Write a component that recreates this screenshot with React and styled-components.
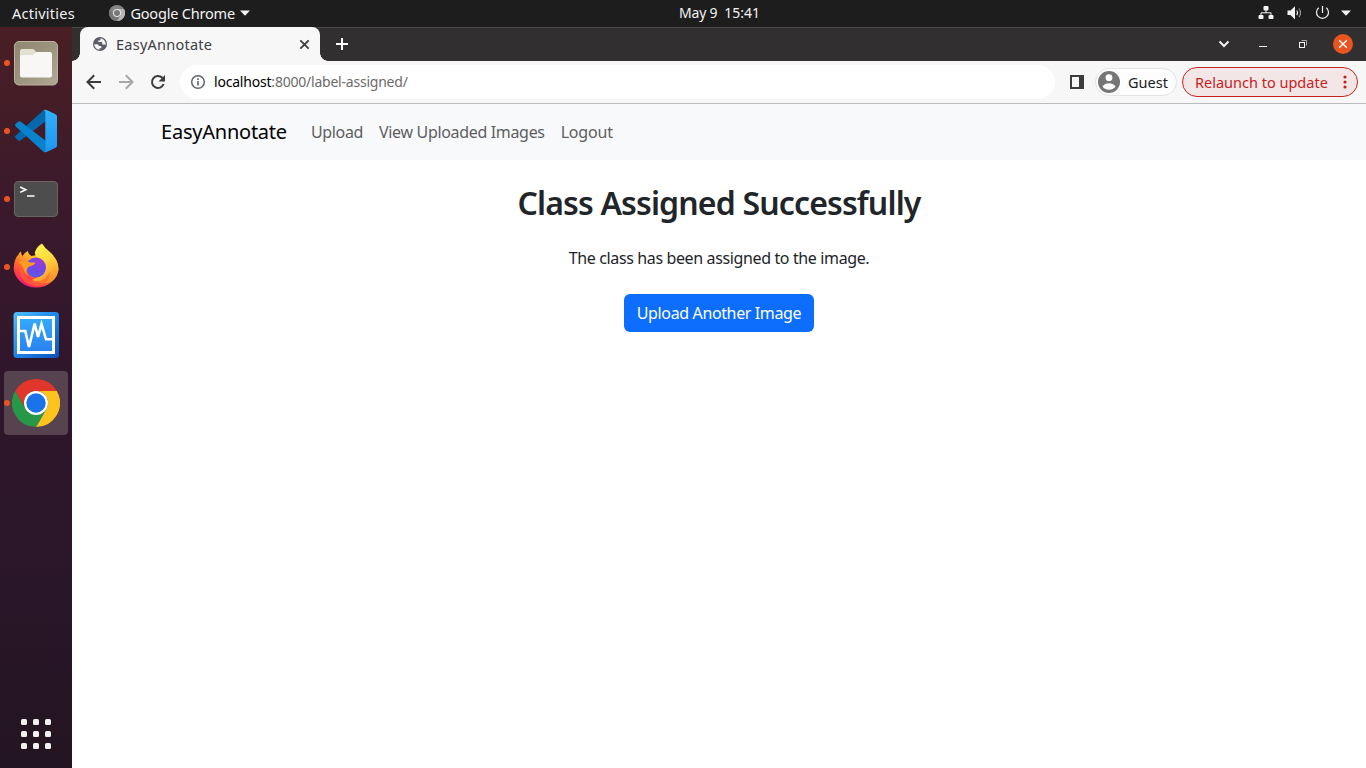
import React from "react";
import styled, { createGlobalStyle, css } from "styled-components";

const Global = createGlobalStyle`
  * { box-sizing: border-box; }
  html, body { margin: 0; padding: 0; overflow: hidden; }
  body { font-family: "Noto Sans", "Open Sans", sans-serif; font-size: 16px; color: #212529; }
  svg { display: block; flex: none; }
`;

const Desktop = styled.div`
  width: 1366px;
  height: 768px;
  display: flex;
  flex-direction: column;
  background: #fff;
  overflow: hidden;
`;

const Label = styled.span`
  font-size: ${(p) => p.$size || 14}px;
  line-height: ${(p) => p.$line || 20}px;
  letter-spacing: ${(p) => p.$track || 0}px;
  color: ${(p) => p.$color || "inherit"};
  white-space: pre;
`;

const TopBar = styled.header`
  height: 27px;
  flex: none;
  display: grid;
  grid-template-columns: 667px auto 1fr;
  align-items: center;
  background: #1d1d1d;
  color: #f2f2f2;
  padding: 0 15px 1px 12px;
`;

const TopLeft = styled.div`
  display: flex;
  align-items: center;
`;

const AppMenu = styled.div`
  display: flex;
  align-items: center;
  gap: 5.5px;
  margin-left: 34px;
`;

const Clock = styled.div`
  display: flex;
  gap: 7px;
`;

const StatusArea = styled.div`
  display: flex;
  align-items: center;
  justify-content: flex-end;
`;

const Body = styled.div`
  flex: 1;
  display: flex;
  min-height: 0;
`;

const Dock = styled.nav`
  width: 72px;
  flex: none;
  display: flex;
  flex-direction: column;
  align-items: center;
  gap: 4px;
  padding-top: 4px;
  background: linear-gradient(180deg, #4a1f24 0%, #3c1a2b 22%, #2f162b 48%, #2a1629 75%, #231520 100%);
`;

const DockItem = styled.div`
  position: relative;
  width: 64px;
  height: 64px;
  display: flex;
  align-items: center;
  justify-content: center;
  border-radius: 4px;
  ${(p) => p.$active && css`background: #57424f;`}
`;

const RunningDot = styled.i`
  position: absolute;
  left: 0;
  top: 29px;
  width: 6px;
  height: 6px;
  border-radius: 50%;
  background: #e95420;
`;

const AppGrid = styled.div`
  margin-top: auto;
  margin-bottom: 19px;
  display: grid;
  grid-template-columns: repeat(3, 6px);
  grid-auto-rows: 6px;
  gap: 6px;
`;

const GridDot = styled.i`
  border-radius: 1.5px;
  background: #f2f1ef;
`;

const Browser = styled.main`
  flex: 1;
  display: flex;
  flex-direction: column;
  min-width: 0;
`;

const TabStrip = styled.div`
  height: 34px;
  flex: none;
  display: flex;
  background: #322f30;
  box-shadow: inset 0 1px 0 #4b4849;
  padding-left: 8px;
`;

const Tab = styled.div`
  position: relative;
  width: 240px;
  height: 34px;
  display: flex;
  align-items: center;
  padding: 0 10px 0 12px;
  gap: 8px;
  border-radius: 8px 8px 0 0;
  background: #f7f7f7;
  &::before, &::after {
    content: "";
    position: absolute;
    bottom: 0;
    width: 8px;
    height: 8px;
  }
  &::before { left: -8px; background: radial-gradient(circle at 0 0, transparent 7.5px, #f7f7f7 8px); }
  &::after { right: -8px; background: radial-gradient(circle at 100% 0, transparent 7.5px, #f7f7f7 8px); }
`;

const TabTitle = styled.div`
  flex: 1;
  display: flex;
`;

const NewTab = styled.div`
  display: flex;
  align-items: center;
  margin-left: 15px;
`;

const WindowButtons = styled.div`
  margin-left: auto;
  display: flex;
  align-items: center;
  padding-right: 13px;
`;

const CloseButton = styled.div`
  width: 20px;
  height: 20px;
  margin-left: 25px;
  border-radius: 50%;
  background: #e95420;
  display: flex;
  align-items: center;
  justify-content: center;
`;

const Toolbar = styled.div`
  height: 43px;
  flex: none;
  display: flex;
  align-items: center;
  background: #f7f7f7;
  border-bottom: 1px solid #bcbcbc;
  padding: 0 8px 0 14px;
`;

const NavIcons = styled.div`
  display: flex;
  gap: 16px;
`;

const AddressBar = styled.div`
  width: 875px;
  height: 34px;
  margin-left: 14px;
  padding-left: 10px;
  display: flex;
  align-items: center;
  gap: 8px;
  border-radius: 17px;
  background: #fff;
`;

const Url = styled.div`
  display: flex;
`;

const Profile = styled.div`
  width: 82px;
  height: 28px;
  margin-left: 11px;
  padding-left: 2px;
  display: flex;
  align-items: center;
  gap: 8px;
  border-radius: 14px;
  border: 1px solid #e4e4e4;
  background: #fdfdfd;
`;

const Relaunch = styled.div`
  width: 176px;
  height: 30px;
  margin-left: auto;
  padding: 0 10.5px 0 12px;
  display: flex;
  align-items: center;
  justify-content: space-between;
  border-radius: 15px;
  border: 1px solid #c5221f;
  background: #f3e6e6;
`;

const SiteNav = styled.nav`
  height: 56px;
  flex: none;
  display: flex;
  align-items: center;
  background: #f8f9fb;
  padding-left: 89px;
`;

const Brand = styled.div`
  width: 126px;
  margin-right: 24px;
  display: flex;
`;

const Links = styled.div`
  display: flex;
  gap: 16px;
`;

const Page = styled.section`
  flex: 1;
  display: flex;
  flex-direction: column;
  align-items: center;
  padding-top: 24px;
  background: #fff;
`;

const Heading = styled.h1`
  margin: 0 0 24px;
  font-size: 32px;
  line-height: 38px;
  font-weight: 600;
  letter-spacing: -0.85px;
  white-space: nowrap;
`;

const Message = styled.p`
  margin: 0 0 24px;
  line-height: 24px;
  letter-spacing: -0.37px;
  white-space: nowrap;
`;

const UploadButton = styled.button`
  width: 190px;
  height: 38px;
  padding: 0;
  border: 0;
  border-radius: 6px;
  background: #0d6efd;
  color: #fff;
  font: inherit;
  line-height: 24px;
  letter-spacing: -0.37px;
  white-space: nowrap;
`;

const FilesIcon = () => (
  <svg width="48" height="48" viewBox="0 0 48 48">
    <defs>
      <linearGradient id="files" x1="0" y1="0" x2="1" y2="1">
        <stop offset="0" stopColor="#8f876f" />
        <stop offset="0.5" stopColor="#9c947f" />
        <stop offset="1" stopColor="#b0a993" />
      </linearGradient>
    </defs>
    <rect x="2.5" y="2.5" width="43" height="43.5" rx="4.5" fill="url(#files)" stroke="#b9b3a2" />
    <path d="M8 18v-6a2 2 0 0 1 2-2h10.500q1 0 1.700.8L24 13H36v6z" fill="#e2dfd3" />
    <path d="M8 18a2 2 0 0 1 2-2h10q1 0 1.800-.8l1.400-1.400q.7-.8 1.600-.8H38a2 2 0 0 1 2 2V36.500a2 2 0 0 1-2 2H10a2 2 0 0 1-2-2z" fill="#f8f7f6" />
  </svg>
);

const CodeIcon = () => (
  <svg width="48" height="48" viewBox="0 0 48 48">
    <defs>
      <linearGradient id="code" x1="0" y1="0" x2="0" y2="1">
        <stop offset="0" stopColor="#32b2f8" />
        <stop offset="1" stopColor="#1f94f0" />
      </linearGradient>
    </defs>
    <path d="M33.500 2.800Q31.500 3 30.300 4.200L3.500 28.800a1.500 1.500 0 0 0 0 2.200L6 33.300q1.200 1 2.500.1L34 14z" fill="#0669ad" />
    <path d="M33.500 45.200Q31.500 45 30.300 43.800L3.500 19.200a1.500 1.500 0 0 1 0-2.200L6 14.700q1.200-1 2.500-.1L34 34z" fill="#0a83cd" />
    <path d="M30.500 44.200Q33.300 46 33.300 42.500V5.500Q33.300 2 30.500 3.800Q32.500 2 35.200 3.200L43.500 7.200Q45 8 45 9.600V38.400Q45 40 43.500 40.800L35.200 44.800Q32.500 46 30.500 44.200z" fill="url(#code)" />
  </svg>
);

const TerminalIcon = () => (
  <svg width="48" height="48" viewBox="0 0 48 48">
    <rect x="2.500" y="6.500" width="43" height="35" rx="3.500" fill="#4d4d4d" stroke="#696662" />
    <path d="M8.200 12l5.600 2.700-5.600 2.700" fill="none" stroke="#fff" strokeWidth="1.600" />
    <path d="M15 21h7.500" stroke="#fff" strokeWidth="1.500" />
  </svg>
);

const FirefoxIcon = () => (
  <svg width="48" height="48" viewBox="0 0 48 48">
    <defs>
      <linearGradient id="ffBody" x1="0.85" y1="0.1" x2="0.25" y2="0.95">
        <stop offset="0" stopColor="#fff04f" />
        <stop offset="0.3" stopColor="#ffb52a" />
        <stop offset="0.6" stopColor="#ff6a2c" />
        <stop offset="0.85" stopColor="#ff3750" />
        <stop offset="1" stopColor="#e8127c" />
      </linearGradient>
      <linearGradient id="ffFlame" x1="0.3" y1="0" x2="0.7" y2="1">
        <stop offset="0" stopColor="#fff44f" />
        <stop offset="0.45" stopColor="#ffd83c" />
        <stop offset="1" stopColor="#ff8a2a" />
      </linearGradient>
      <radialGradient id="ffGlobe" cx="0.65" cy="0.25" r="0.8">
        <stop offset="0" stopColor="#a338d6" />
        <stop offset="0.5" stopColor="#7048e6" />
        <stop offset="1" stopColor="#5b5bea" />
      </radialGradient>
    </defs>
    <path d="M6.500 11.500Q7.500 8.800 9 8.500Q9 11.500 10.500 13Q13 9 16 8Q16 11 19.500 13L36 10Q46.500 17 46.500 26A22.500 20.500 0 0 1 1.700 26Q1.700 16 6.500 11.500z" fill="url(#ffBody)" />
    <path d="M30 0.500Q33 5.500 38.500 9.500Q41 11.500 41.500 13Q47 19 46.300 28Q44 39 34 40Q28 41 20 37L32 31Q35 22 30 16Q22 14 23 9Q24.500 3.500 30 0.500z" fill="url(#ffFlame)" />
    <circle cx="24" cy="24.500" r="10" fill="url(#ffGlobe)" />
    <path d="M7 19Q10 16.500 14 17.500Q15 19.500 23 19.500Q24 21.500 17.500 23.500Q14.500 25 14.500 28Q14 31 17 33Q12 31 11 24Q9 21 7 19z" fill="#ff9c24" />
    <path d="M10 24Q10 36 22 38Q34 39 38 28Q38 43 24 43Q10 42 8 29z" fill="#ff6530" opacity="0.65" />
  </svg>
);

const MonitorIcon = () => (
  <svg width="48" height="48" viewBox="0 0 48 48">
    <defs>
      <linearGradient id="vmFrame" x1="0" y1="0" x2="1" y2="1">
        <stop offset="0" stopColor="#4fc0fb" />
        <stop offset="0.5" stopColor="#1f86e8" />
        <stop offset="1" stopColor="#0a50be" />
      </linearGradient>
      <linearGradient id="vmScreen" x1="0" y1="0" x2="0" y2="1">
        <stop offset="0" stopColor="#35abfb" />
        <stop offset="1" stopColor="#2880f0" />
      </linearGradient>
    </defs>
    <rect x="1.500" y="1" width="45.500" height="46" rx="3.500" fill="url(#vmFrame)" />
    <rect x="6.500" y="6.500" width="35" height="35" fill="url(#vmScreen)" stroke="#fff" strokeWidth="3" />
    <path d="M7.500 20h5.800l3.700 16 5.700-23.500L26 26l3.500-13L34 28.300h7" fill="none" stroke="#fff" strokeWidth="2.600" />
  </svg>
);

const ChromeIcon = () => (
  <svg width="48" height="48" viewBox="0 0 48 48">
    <path d="M24 12H44.800A24 24 0 0 0 3.200 12L13.600 30A12 12 0 0 1 24 12z" fill="#e0362c" />
    <path d="M44.800 12A24 24 0 0 1 24 48L34.400 30A12 12 0 0 0 24 12z" fill="#fcc31e" />
    <path d="M24 48A24 24 0 0 1 3.200 12L13.600 30A12 12 0 0 0 34.400 30z" fill="#279847" />
    <circle cx="24" cy="24" r="12" fill="#fff" />
    <circle cx="24" cy="24" r="9.700" fill="#1a73e8" />
  </svg>
);

const ChromeMonoIcon = () => (
  <svg width="16" height="16" viewBox="0 0 16 16">
    <circle cx="8" cy="8" r="8" fill="#858585" />
    <path d="M8 4H15A8 8 0 0 1 8 16L11.500 10z" fill="#b5b5b5" />
    <path d="M1.100 4A8 8 0 0 0 8 16L11 11 4.500 10z" fill="#777" />
    <circle cx="8" cy="8" r="4" fill="#e6e6e6" />
    <circle cx="8" cy="8" r="3" fill="#777" />
  </svg>
);

const Caret = () => (
  <svg width="10" height="6" viewBox="0 0 10 6">
    <path d="M0 .5h10L5 5.700z" fill="#f2f2f2" />
  </svg>
);

const StatusIcons = () => (
  <svg width="93" height="18" viewBox="0 0 93 18" fill="none" stroke="#f2f2f2">
    <g fill="#f2f2f2" stroke="none">
      <rect x="5.500" y="2" width="5" height="4.500" rx="1" />
      <rect x="0.500" y="11" width="5" height="4" rx="1" />
      <rect x="10.500" y="11" width="5" height="4" rx="1" />
      <path d="M29.500 6.500h3l4.500-4.300v13.200l-4.500-4.300h-3z" />
      <path d="M83 6.500h10L88 11.700z" />
    </g>
    <path d="M8 6v3M3 11.500V8.800h10v2.700" />
    <path d="M38.800 6.500q1.600 2.300 0 4.600" strokeWidth="1.200" />
    <path d="M41 4.500q3 4.300 0 8.600" stroke="#9a9a9a" strokeWidth="1.100" />
    <path d="M60.700 3.700a6 6 0 1 0 7.600 0M64.500 2v7" strokeWidth="1.200" />
  </svg>
);

const GlobeIcon = () => (
  <svg width="16" height="16" viewBox="0 0 16 16">
    <circle cx="8" cy="8" r="7" fill="#5a5e64" />
    <path d="M2.200 8.300h3q1.600.2 1.600 1.700h2.500v2.300H7.500v1.500A6 6 0 0 1 2.200 8.300z" fill="#f7f7f7" />
    <path d="M8.500 2.200v1.200q0 1-1.200 1H6.200V6h4v2.400h2.400q.9.200 1 .9A6 6 0 0 0 8.500 2.200z" fill="#f7f7f7" />
  </svg>
);

const CloseIcon = ({ color, size = 10, weight = 1.6 }) => (
  <svg width={size} height={size} viewBox="0 0 10 10" fill="none" stroke={color} strokeWidth={weight}>
    <path d="M1.200 1.200l7.600 7.600M8.800 1.200L1.200 8.800" />
  </svg>
);

const PlusIcon = () => (
  <svg width="14" height="14" viewBox="0 0 14 14" stroke="#fff" strokeWidth="2">
    <path d="M7 1v12M1 7h12" />
  </svg>
);

const WindowGlyphs = () => (
  <svg width="90" height="20" viewBox="0 0 90 20" fill="none" stroke="#f2f2f2">
    <path d="M1.500 7.500l4.500 4.500 4.500-4.500" strokeWidth="2" />
    <path d="M41 12.500h8" />
    <path d="M83.500 6.500h5v5" stroke="#a9a7a7" />
    <rect x="81.500" y="8.500" width="5" height="5" />
  </svg>
);

const BackIcon = () => (
  <svg width="16" height="16" viewBox="0 0 16 16" fill="none" stroke="#3c3c3c" strokeWidth="2">
    <path d="M15 8H2M8.200 1.300L1.500 8l6.700 6.700" />
  </svg>
);

const ForwardIcon = () => (
  <svg width="16" height="16" viewBox="0 0 16 16" fill="none" stroke="#a6a6a6" strokeWidth="2">
    <path d="M1 8h13M7.800 1.300L14.500 8l-6.700 6.700" />
  </svg>
);

const ReloadIcon = () => (
  <svg width="16" height="16" viewBox="0 0 16 16">
    <path d="M13.600 10A6 6 0 1 1 12.300 3.800L13.500 5" fill="none" stroke="#3c3c3c" strokeWidth="2" />
    <path d="M15 1v6.500H8.500z" fill="#3c3c3c" />
  </svg>
);

const InfoIcon = () => (
  <svg width="16" height="16" viewBox="0 0 16 16">
    <circle cx="8" cy="8" r="6.300" fill="none" stroke="#5f6368" strokeWidth="1.500" />
    <path d="M8 7v4.600M8 4.300v1.700" stroke="#5f6368" strokeWidth="1.600" />
  </svg>
);

const SidePanelIcon = styled.div`
  width: 14px;
  height: 14px;
  margin-left: 15px;
  border: 2px solid #3c3c3c;
  border-right-width: 5px;
`;

const AvatarIcon = () => (
  <svg width="22" height="22" viewBox="0 0 22 22">
    <circle cx="11" cy="11" r="11" fill="#767676" />
    <circle cx="11" cy="6.700" r="3.400" fill="#fff" />
    <path d="M4.500 15.500Q7 12.300 11 12.300T17.500 15.500Q15 18.800 11 18.800T4.500 15.500z" fill="#fff" />
  </svg>
);

const MoreIcon = () => (
  <svg width="4" height="14" viewBox="0 0 4 14" fill="#c5221f">
    <circle cx="2" cy="2" r="1.600" />
    <circle cx="2" cy="7" r="1.600" />
    <circle cx="2" cy="12" r="1.600" />
  </svg>
);

const dockApps = [
  { Icon: FilesIcon, running: true },
  { Icon: CodeIcon, running: true },
  { Icon: TerminalIcon, running: true },
  { Icon: FirefoxIcon, running: true },
  { Icon: MonitorIcon },
  { Icon: ChromeIcon, running: true, active: true },
];

const links = [
  { text: "Upload", track: -0.36 },
  { text: "View Uploaded Images", track: -0.33 },
  { text: "Logout", track: -0.2 },
];

export default function App() {
  return (
    <Desktop>
      <Global />
      <TopBar>
        <TopLeft>
          <Label $size={14.5} $track={0.25}>Activities</Label>
          <AppMenu>
            <ChromeMonoIcon />
            <Label $size={14.5} $track={-0.2}>Google Chrome</Label>
            <Caret />
          </AppMenu>
        </TopLeft>
        <Clock>
          <Label $track={-0.2}>May 9</Label>
          <Label>15:41</Label>
        </Clock>
        <StatusArea>
          <StatusIcons />
        </StatusArea>
      </TopBar>
      <Body>
        <Dock>
          {dockApps.map(({ Icon, running, active }, i) => (
            <DockItem key={i} $active={active}>
              <Icon />
              {running && <RunningDot />}
            </DockItem>
          ))}
          <AppGrid>
            {Array.from({ length: 9 }, (_, i) => <GridDot key={i} />)}
          </AppGrid>
        </Dock>
        <Browser>
          <TabStrip>
            <Tab>
              <GlobeIcon />
              <TabTitle><Label $size={14.5} $track={0.25} $color="#3c4043">EasyAnnotate</Label></TabTitle>
              <CloseIcon color="#3c3c3c" size={11} />
            </Tab>
            <NewTab><PlusIcon /></NewTab>
            <WindowButtons>
              <WindowGlyphs />
              <CloseButton><CloseIcon color="#fff" weight={1.4} /></CloseButton>
            </WindowButtons>
          </TabStrip>
          <Toolbar>
            <NavIcons>
              <BackIcon />
              <ForwardIcon />
              <ReloadIcon />
            </NavIcons>
            <AddressBar>
              <InfoIcon />
              <Url>
                <Label $track={-0.2} $color="#000">localhost</Label>
                <Label $track={-0.22} $color="#6b6b6b">:8000/label-assigned/</Label>
              </Url>
            </AddressBar>
            <SidePanelIcon />
            <Profile>
              <AvatarIcon />
              <Label $size={14.5} $color="#202124">Guest</Label>
            </Profile>
            <Relaunch>
              <Label $size={14.5} $color="#c5221f">Relaunch to update</Label>
              <MoreIcon />
            </Relaunch>
          </Toolbar>
          <SiteNav>
            <Brand><Label $size={20} $line={30} $track={-0.23} $color="#000">EasyAnnotate</Label></Brand>
            <Links>
              {links.map(({ text, track }) => (
                <Label key={text} $size={16} $line={24} $track={track} $color="#5d5e5f">{text}</Label>
              ))}
            </Links>
          </SiteNav>
          <Page>
            <Heading>Class Assigned Successfully</Heading>
            <Message>The class has been assigned to the image.</Message>
            <UploadButton>Upload Another Image</UploadButton>
          </Page>
        </Browser>
      </Body>
    </Desktop>
  );
}
